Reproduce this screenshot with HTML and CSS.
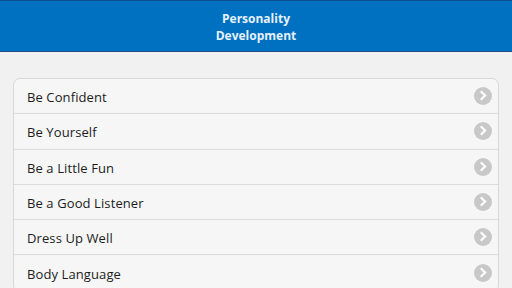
FILE: index.html
```html
<html>

<head>
    <meta charset="utf-8">
    <title>Personality Development</title>
    <link rel="stylesheet" href="styles.css">
</head>

<body>
    <div id="header">
        <div class="title">Personality<br>Development</div>
    </div>
    <div id="content">
        <ul class="list">
            <li class="item"><span class="label">Be Confident</span><span class="arrow"></span></li>
            <li class="item"><span class="label">Be Yourself</span><span class="arrow"></span></li>
            <li class="item"><span class="label">Be a Little Fun</span><span class="arrow"></span></li>
            <li class="item"><span class="label">Be a Good Listener</span><span class="arrow"></span></li>
            <li class="item"><span class="label">Dress Up Well</span><span class="arrow"></span></li>
            <li class="item"><span class="label">Body Language</span><span class="arrow"></span></li>
        </ul>
    </div>
</body>

</html>
```

FILE: styles.css
```css
body {
    margin: 0;
    background: #f1f1f1;
    font-family: "Open Sans", "DejaVu Sans", sans-serif;
    overflow: hidden;
}

#header {
    height: 50px;
    background: #0070c0;
    border-top: 1px solid #0a4f8f;
    border-bottom: 1px solid #1d4f86;
    display: flex;
    align-items: center;
    justify-content: center;
}

.title {
    color: #e6f2fc;
    font-weight: bold;
    font-size: 12px;
    line-height: 17px;
    text-align: center;
    margin-top: 1px;
}

#content {
    padding: 26px 13px 0px 13px;
}

.list {
    list-style: none;
    margin: 0;
    padding: 0;
    background: #f6f6f6;
    border: 1px solid #d9d9d9;
    border-radius: 7px;
}

.item {
    height: 34.3px;
    display: flex;
    align-items: center;
    justify-content: space-between;
    padding: 0px 6px 0px 13px;
    border-bottom: 1px solid #dcdcdc;
    color: #1c1c1c;
    font-size: 13px;
    letter-spacing: 0.1px;
}

.label {
    padding-top: 2px;
}

.arrow {
    width: 18px;
    height: 18px;
    border-radius: 50%;
    background: #c8c8c8;
    position: relative;
}

.arrow::after {
    content: "";
    position: absolute;
    left: 4px;
    top: 5px;
    width: 5px;
    height: 5px;
    border-top: 2.5px solid #ffffff;
    border-right: 2.5px solid #ffffff;
    transform: rotate(45deg);
}
```
